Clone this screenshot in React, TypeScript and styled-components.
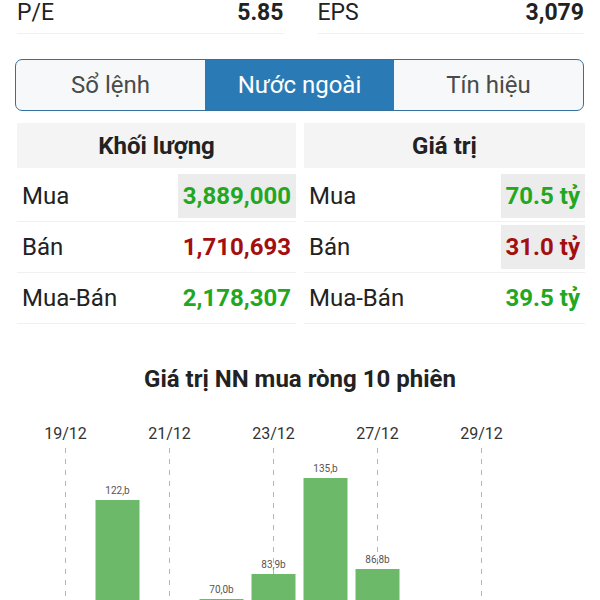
import React, { useState } from 'react';
import styled, { createGlobalStyle } from 'styled-components';

const GlobalStyle = createGlobalStyle`
  html, body {
    margin: 0;
    padding: 0;
    background: #ffffff;
    font-family: Roboto, "Noto Sans", "Liberation Sans", sans-serif;
    color: #222;
  }
  * { box-sizing: border-box; }
`;

const Page = styled.div`
  width: 600px;
  height: 600px;
  overflow: hidden;
`;

const StatGrid = styled.div`
  display: grid;
  grid-template-columns: 1fr 1fr;
  column-gap: 34px;
  padding: 0 16px 0 17px;
`;

const StatRow = styled.div`
  display: flex;
  justify-content: space-between;
  align-items: center;
  height: 34px;
  padding: 1px 0 9px;
  border-bottom: 1px solid #f0f0f0;
  font-size: 23px;
  line-height: 24px;
`;

const StatValue = styled.span`
  font-weight: 700;
`;

const Tabs = styled.div`
  display: grid;
  grid-template-columns: repeat(3, 1fr);
  margin: 25px 16px 0 15px;
  height: 52px;
  border: 1.5px solid #356f9c;
  border-radius: 7px;
  overflow: hidden;
  background: #f6f8f9;
`;

const Tab = styled.button<{ $active?: boolean }>`
  border: none;
  margin: 0;
  padding: 0;
  font-family: inherit;
  font-size: 24px;
  cursor: pointer;
  background: ${p => (p.$active ? '#2a7bb5' : 'transparent')};
  color: ${p => (p.$active ? '#ffffff' : '#4a4a4a')};
`;

const Tables = styled.div`
  display: grid;
  grid-template-columns: 279px 281px;
  column-gap: 8px;
  margin-top: 12px;
  padding-left: 17px;
`;

const Table = styled.div`
  display: flex;
  flex-direction: column;
`;

const TableHead = styled.div`
  height: 45px;
  display: flex;
  align-items: center;
  justify-content: center;
  background: #f4f4f4;
  font-size: 24px;
  font-weight: 700;
  color: #222;
  margin-bottom: 3px;
`;

const Row = styled.div`
  height: 51px;
  display: flex;
  align-items: center;
  justify-content: space-between;
  padding: 3px 0 3px 5px;
  border-bottom: 1px solid #f0f0f0;
  font-size: 24px;
`;

const Label = styled.span`
  color: #222;
`;

const Value = styled.span<{ $tone: 'up' | 'down'; $mark?: boolean }>`
  align-self: stretch;
  display: flex;
  align-items: center;
  padding: 0 5px;
  font-weight: 700;
  color: ${p => (p.$tone === 'up' ? '#22a722' : '#a30e0e')};
  background: ${p => (p.$mark ? '#ececec' : 'transparent')};
`;

const ChartTitle = styled.div`
  margin-top: 40px;
  text-align: center;
  font-size: 24px;
  font-weight: 700;
  line-height: 30px;
  color: #222;
`;

const ChartBox = styled.div`
  margin-top: 17px;
  height: 200px;
`;

type Line = { label: string; value: string; tone: 'up' | 'down'; mark?: boolean };

const volume: Line[] = [
  { label: 'Mua', value: '3,889,000', tone: 'up', mark: true },
  { label: 'Bán', value: '1,710,693', tone: 'down' },
  { label: 'Mua-Bán', value: '2,178,307', tone: 'up' },
];

const amount: Line[] = [
  { label: 'Mua', value: '70.5 tỷ', tone: 'up', mark: true },
  { label: 'Bán', value: '31.0 tỷ', tone: 'down', mark: true },
  { label: 'Mua-Bán', value: '39.5 tỷ', tone: 'up' },
];

const dates = ['19/12', '21/12', '23/12', '27/12', '29/12'];

// slot centres are 52px apart, bar tops measured against chart top
const bars = [
  { slot: 1, top: 89, label: '122,b' },
  { slot: 3, top: 188, label: '70,0b' },
  { slot: 4, top: 163, label: '83,9b' },
  { slot: 5, top: 67, label: '135,b' },
  { slot: 6, top: 158, label: '86,8b' },
];

const slotX = (i: number) => 65.5 + i * 52;

const NetChart: React.FC = () => (
  <svg width="600" height="200" viewBox="0 0 600 200">
    {dates.map((d, i) => (
      <g key={d}>
        <text
          x={slotX(i * 2)}
          y={28}
          textAnchor="middle"
          fontSize="16"
          fill="#333"
          fontFamily="Roboto, sans-serif"
        >
          {d}
        </text>
        <line
          x1={slotX(i * 2)}
          x2={slotX(i * 2)}
          y1={37}
          y2={200}
          stroke="#b5b5b5"
          strokeWidth="1"
          strokeDasharray="5 6"
        />
      </g>
    ))}
    {bars.map(b => (
      <g key={b.label}>
        <rect x={slotX(b.slot) - 22} y={b.top} width={44} height={240 - b.top} fill="#6cba69" />
        <text
          x={slotX(b.slot)}
          y={b.top - 6}
          textAnchor="middle"
          fontSize="10"
          fill="#555"
          fontFamily="Roboto, sans-serif"
        >
          {b.label}
        </text>
      </g>
    ))}
  </svg>
);

const DataTable: React.FC<{ title: string; rows: Line[] }> = ({ title, rows }) => (
  <Table>
    <TableHead>{title}</TableHead>
    {rows.map(r => (
      <Row key={r.label}>
        <Label>{r.label}</Label>
        <Value $tone={r.tone} $mark={r.mark}>
          {r.value}
        </Value>
      </Row>
    ))}
  </Table>
);

const App: React.FC = () => {
  const [tab, setTab] = useState(1);
  const tabs = ['Sổ lệnh', 'Nước ngoài', 'Tín hiệu'];

  return (
    <Page>
      <GlobalStyle />
      <StatGrid>
        <StatRow>
          <span>P/E</span>
          <StatValue>5.85</StatValue>
        </StatRow>
        <StatRow>
          <span>EPS</span>
          <StatValue>3,079</StatValue>
        </StatRow>
      </StatGrid>

      <Tabs>
        {tabs.map((t, i) => (
          <Tab key={t} $active={tab === i} onClick={() => setTab(i)}>
            {t}
          </Tab>
        ))}
      </Tabs>

      <Tables>
        <DataTable title="Khối lượng" rows={volume} />
        <DataTable title="Giá trị" rows={amount} />
      </Tables>

      <ChartTitle>Giá trị NN mua ròng 10 phiên</ChartTitle>
      <ChartBox>
        <NetChart />
      </ChartBox>
    </Page>
  );
};

export default App;
